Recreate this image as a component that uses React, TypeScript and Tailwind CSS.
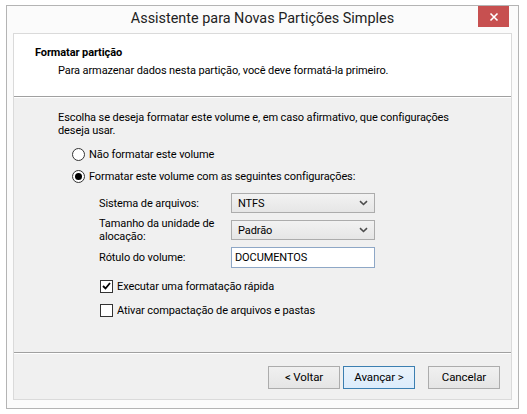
import React from "react";

const font = { fontFamily: "Roboto, 'Liberation Sans', sans-serif" };

function Chevron() {
  return (
    <svg width="9" height="6" viewBox="0 0 9 6" className="shrink-0">
      <path d="M1 1.2 L4.5 4.5 L8 1.2" fill="none" stroke="#4d4d4d" strokeWidth="1.6" />
    </svg>
  );
}

function Select({ value }: { value: string }) {
  return (
    <div className="flex h-[20px] w-[144px] items-center justify-between border border-[#acacac] bg-gradient-to-b from-[#f2f2f2] to-[#e6e6e6] pl-[6px] pr-[6px] text-black">
      <span>{value}</span>
      <Chevron />
    </div>
  );
}

function Radio({ checked, label }: { checked?: boolean; label: string }) {
  return (
    <div className="flex h-[14px] items-center gap-[4px]">
      <span className="flex h-[13px] w-[13px] items-center justify-center rounded-full border border-[#333] bg-white">
        {checked && <span className="h-[7px] w-[7px] rounded-full bg-black" />}
      </span>
      <span>{label}</span>
    </div>
  );
}

function Check({ checked, label }: { checked?: boolean; label: string }) {
  return (
    <div className="flex h-[14px] items-center gap-[4px]">
      <span className="flex h-[13px] w-[13px] items-center justify-center border border-[#333] bg-white">
        {checked && (
          <svg width="9" height="8" viewBox="0 0 9 8">
            <path d="M1 4 L3.5 6.5 L8 1" fill="none" stroke="#000" strokeWidth="1.8" />
          </svg>
        )}
      </span>
      <span>{label}</span>
    </div>
  );
}

function Button({ label, primary }: { label: string; primary?: boolean }) {
  return (
    <button
      className={
        "h-[23px] w-[72px] border bg-gradient-to-b text-[11.5px] text-black " +
        (primary
          ? "border-[#3c7fb1] from-[#eaf3fb] to-[#dcecfc]"
          : "border-[#acacac] from-[#f0f0f0] to-[#e5e5e5]")
      }
    >
      {label}
    </button>
  );
}

export default function App() {
  return (
    <div className="h-[414px] w-[527px] bg-white pl-[6px] pt-[5px]" style={font}>
      <div className="flex h-[404px] w-[513px] flex-col border border-[#b4b4b4] bg-[#fbfbfb] px-[6px] pb-[8px]">
        <div className="relative flex h-[27px] shrink-0 items-center justify-center text-[14.4px] text-[#222]">
          <span className="-mt-[1px]">Assistente para Novas Partições Simples</span>
          <div className="absolute right-[3px] top-0 flex h-[21px] w-[31px] items-center justify-center bg-[#c75050] text-white">
            <svg width="10" height="10" viewBox="0 0 10 10">
              <path d="M1.5 1.5 L8.5 8.5 M8.5 1.5 L1.5 8.5" stroke="#fff" strokeWidth="1.6" />
            </svg>
          </div>
        </div>

        <div className="flex flex-1 flex-col border border-[#dadada] text-[11px] leading-[13px] tracking-[-0.1px] text-black">
          <div className="h-[62px] shrink-0 bg-white pl-[21px] pt-[12px]">
            <div className="font-bold">Formatar partição</div>
            <div className="mt-[5px] pl-[23px]">
              Para armazenar dados nesta partição, você deve formatá-la primeiro.
            </div>
          </div>
          <div className="h-[2px] shrink-0 border-t border-[#a0a0a0] bg-white" />

          <div className="flex flex-1 flex-col bg-[#f0f0f0] pl-[44px] pt-[13px]">
            <div>
              Escolha se deseja formatar este volume e, em caso afirmativo, que configurações
              <br />
              deseja usar.
            </div>

            <div className="ml-[14px] mt-[10px] flex flex-col gap-[8px]">
              <Radio label="Não formatar este volume" />
              <Radio checked label="Formatar este volume com as seguintes configurações:" />
            </div>

            <div className="ml-[41px] mt-[10px] grid grid-cols-[132px_144px] grid-rows-[20px_20px_21px] items-center gap-y-[7px]">
              <span>Sistema de arquivos:</span>
              <Select value="NTFS" />
              <span className="-mt-[1px]">
                Tamanho da unidade de
                <br />
                alocação:
              </span>
              <Select value="Padrão" />
              <span>Rótulo do volume:</span>
              <div className="flex h-[21px] items-center border border-[#8ea7c6] bg-white pl-[3px]">
                DOCUMENTOS
              </div>
            </div>

            <div className="ml-[42px] mt-[11px] flex flex-col gap-[10px]">
              <Check checked label="Executar uma formatação rápida" />
              <Check label="Ativar compactação de arquivos e pastas" />
            </div>
          </div>

          <div className="h-[2px] shrink-0 border-t border-[#a0a0a0] bg-white" />
          <div className="flex h-[45px] shrink-0 items-start justify-end bg-[#f0f0f0] pr-[11px] pt-[12px]">
            <Button label="< Voltar" />
            <div className="w-[3px]" />
            <Button primary label="Avançar >" />
            <div className="w-[13px]" />
            <Button label="Cancelar" />
          </div>
        </div>
      </div>
    </div>
  );
}
